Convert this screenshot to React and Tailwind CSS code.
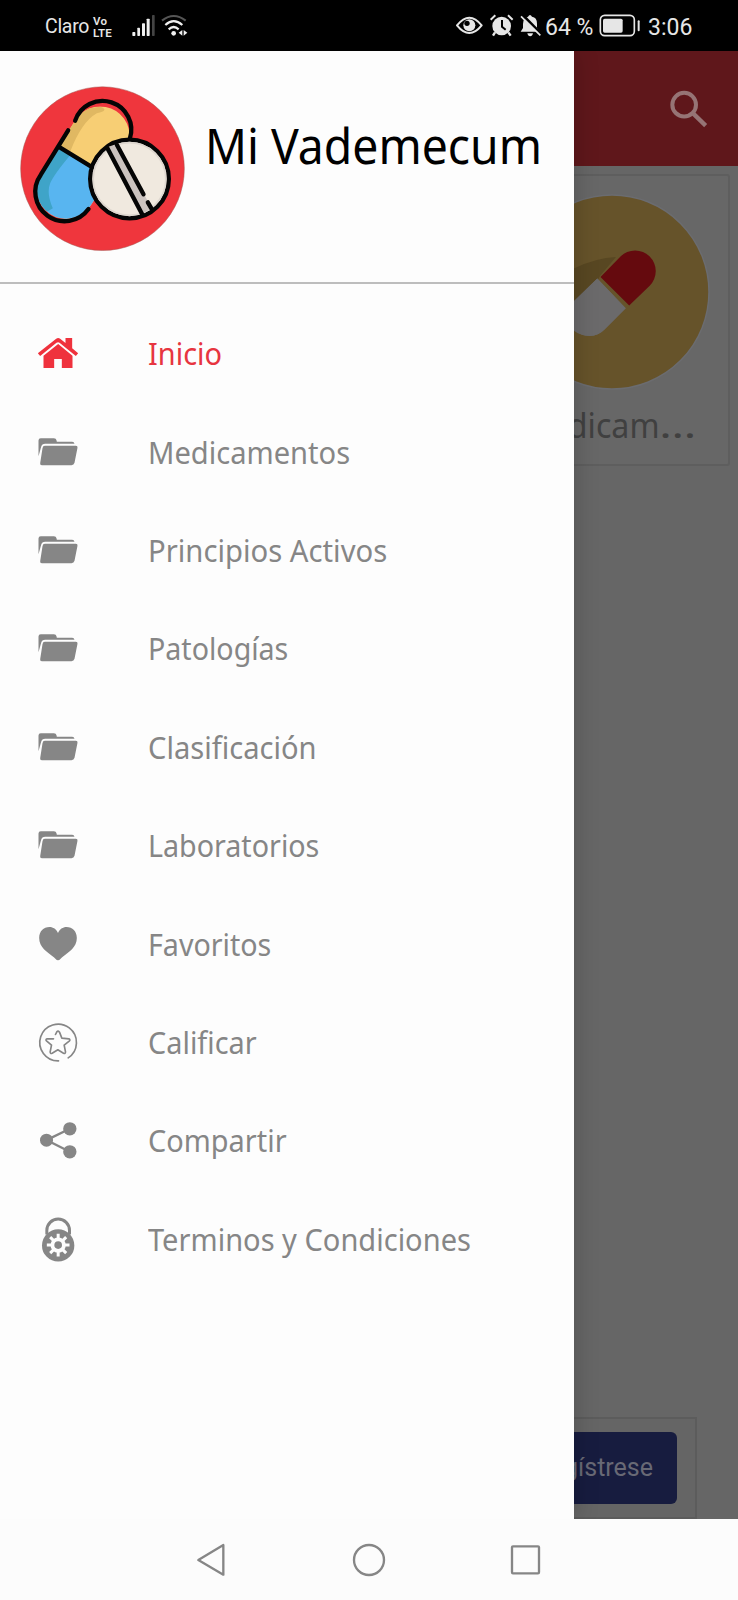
import React from "react";

const GREY = "#868686";
const RED = "#e73540";

function IconBox({ dx, dy, children }) {
  return (
    <svg width="48" height="48" viewBox="-72 -72 144 144" className="shrink-0">
      <g transform={`translate(${-dx} ${-dy})`}>{children}</g>
    </svg>
  );
}

function HomeIcon() {
  return (
    <IconBox dx={172.5} dy={129}>
      <g fill="#ef323d">
        <path d="M112 130 L167 86 Q173 82 179 86 L195 99 V84 H215 V115 L233 130 L226 138 L177 98 Q173 95 168 98 L119 138 Z" />
        <path d="M173 102 L216 137 V174 H184 V147 H161 V174 H129 V137 Z" />
      </g>
    </IconBox>
  );
}

function FolderIcon() {
  return (
    <IconBox dx={172.5} dy={425.5}>
      <g fill={GREY}>
        <path d="M114 438 V391 Q114 384 121 384 H160 Q167 384 168 390 L169 395 H215 Q221 395 222 401 H134 Q124 401 122 410 Z" />
        <path d="M133 407 H226 Q232 407 231 413 L222 458 Q220 465 213 465 H124 Q118 465 119 459 L126 414 Q127 407 133 407 Z" />
      </g>
    </IconBox>
  );
}

function HeartIcon() {
  return (
    <IconBox dx={172.5} dy={131}>
      <path
        fill={GREY}
        d="M172.500 180 Q168 180 160 171 C140 155 116 141 116 113 C116 93 129 80 147 80 C158 80 168 87 172.500 98 C177 87 187 80 198 80 C216 80 229 93 229 113 C229 141 205 155 185 171 Q177 180 172.500 180 Z"
      />
    </IconBox>
  );
}

function StarIcon() {
  return (
    <IconBox dx={172.5} dy={425.5}>
      <g fill="none" stroke={GREY} strokeWidth="5" strokeLinecap="round" strokeLinejoin="round">
        <path d="M174 482 A55 55 0 1 1 203 473" />
        <path d="M159 416 L140 416 Q134 418 138 422 L153 435 L149 455 Q149 462 155 459 L172 449 L189 459 Q195 462 195 455 L191 435 L207 422 Q210 418 205 416 L184 414 L177 396 Q173 390 169 395 L165 403" />
      </g>
    </IconBox>
  );
}

function ShareIcon() {
  return (
    <IconBox dx={172.5} dy={120.6}>
      <path d="M208 87 L138 121 L208 156" fill="none" stroke={GREY} strokeWidth="7" />
      <g fill={GREY}>
        <circle cx="138" cy="121" r="19.500" />
        <circle cx="208" cy="87" r="20" />
        <circle cx="208" cy="156" r="20" />
      </g>
    </IconBox>
  );
}

function LockIcon() {
  return (
    <IconBox dx={172.5} dy={415.8}>
      <path d="M139 402 V390 A34 34 0 0 1 207 390 V402" fill="none" stroke={GREY} strokeWidth="9" />
      <circle cx="173" cy="435" r="48.500" fill={GREY} />
      <g stroke="#fdfdfd" strokeWidth="9">
        <path d="M173 400 V468 M139 434 H207 M149 410 L197 458 M197 410 L149 458" />
      </g>
      <circle cx="173" cy="434" r="23" fill="#fdfdfd" />
      <circle cx="173" cy="434" r="11.500" fill={GREY} />
    </IconBox>
  );
}

const ITEMS = [
  { label: "Inicio", icon: HomeIcon, cls: "scale-x-[0.965]", active: true },
  { label: "Medicamentos", icon: FolderIcon, cls: "scale-x-[0.97]" },
  { label: "Principios Activos", icon: FolderIcon, cls: "scale-x-[0.975]" },
  { label: "Patologías", icon: FolderIcon, cls: "scale-x-[0.953]" },
  { label: "Clasificación", icon: FolderIcon, cls: "scale-x-[0.97]" },
  { label: "Laboratorios", icon: FolderIcon, cls: "scale-x-[0.955]" },
  { label: "Favoritos", icon: HeartIcon, cls: "scale-x-[0.954]" },
  { label: "Calificar", icon: StarIcon, cls: "scale-x-[0.962]" },
  { label: "Compartir", icon: ShareIcon, cls: "scale-x-[0.964]" },
  { label: "Terminos y Condiciones", icon: LockIcon, cls: "scale-x-[0.968]" },
];

function Logo() {
  return (
    <svg width="165" height="165" viewBox="59.500 78 495 495" className="shrink-0">
      <defs>
        <clipPath id="capsule">
          <path d="M228 177 A88 88 0 0 1 376 272 L272 436 A88 88 0 0 1 124 340 Z" />
        </clipPath>
      </defs>
      <circle cx="307" cy="326" r="245.500" fill="#ef363d" stroke="#a35a55" strokeWidth="1.500" />
      <g clipPath="url(#capsule)">
        <rect x="90" y="120" width="320" height="370" fill="#f7ce74" />
        <path d="M170 270 L228 150 L300 140 Q330 150 290 160 Q245 185 210 275 Z" fill="#e0b862" />
        <path d="M90 205 L290 330 L300 490 H90 Z" fill="#58b5f0" />
        <path d="M90 205 L213 282 Q160 345 150 370 Q138 400 158 445 L100 480 Z" fill="#3fa4c8" />
      </g>
      <g fill="none" stroke="#050505" strokeWidth="13" strokeLinecap="round">
        <path d="M225 182 A86 86 0 0 1 389 236" />
        <path d="M204 211 L122 344 A88 88 0 0 0 265 447" />
        <path d="M180 263 L272 319" />
      </g>
      <circle cx="388" cy="357" r="118" fill="#f0e9df" stroke="#050505" strokeWidth="13" />
      <circle cx="388" cy="357" r="109" fill="none" stroke="#ded7cf" strokeWidth="5" />
      <path d="M320 262 L350 252 L454 444 L426 462 Z" fill="#cbc3bf" />
      <g fill="none" stroke="#050505" strokeWidth="13" strokeLinecap="round">
        <path d="M321 263 L426 463 M350 254 L430 403 M443 427 L454 446" />
      </g>
    </svg>
  );
}

function StatusBar() {
  return (
    <header className="flex h-[51px] items-center bg-black pl-[45px] pr-[44px] font-[Roboto,sans-serif] text-[#e6e6e6]">
      <span className="mt-[3px] w-[48px] text-[19.500px] leading-none tracking-[-0.3px] whitespace-nowrap">Claro</span>
      <span className="mt-[2px] flex w-[39px] flex-col text-[11.500px] leading-[12px] font-semibold tracking-[0.2px]">
        <span className="block h-[12px]">Vo</span>
        <span className="block h-[12px]">LTE</span>
      </span>
      <svg width="56" height="24" viewBox="396 42 168 72">
        <g fill="#f0f0f0">
          <rect x="397" y="96" width="9" height="12" rx="2" />
          <rect x="412" y="83" width="8" height="25" rx="2" />
          <rect x="426" y="70" width="9" height="38" rx="2" />
          <rect x="440" y="56" width="9" height="52" rx="2" />
          <rect x="456" y="45" width="8" height="63" rx="2" fill="#444" />
          <circle cx="521" cy="100" r="7" />
          <path d="M547 90 V107 L536 98.500 Z M551 90 V107 L562 98.500 Z" />
        </g>
        <g fill="none" strokeWidth="6.500">
          <path d="M486 62 Q521 34 557 62" stroke="#555" />
          <path d="M496 75 Q521 52 547 75" stroke="#f0f0f0" />
          <path d="M506 88 Q521 74 536 88" stroke="#f0f0f0" />
        </g>
      </svg>
      <svg width="86" height="24" viewBox="257 42 258 72" className="ml-auto">
        <path d="M260 76 Q297 30 334 76 Q297 122 260 76 Z" fill="none" stroke="#e6e6e6" strokeWidth="6" strokeLinejoin="round" />
        <circle cx="297" cy="76" r="18" fill="#e6e6e6" />
        <circle cx="290" cy="70" r="8" fill="#000" />
        <circle cx="394" cy="78" r="28" fill="#e6e6e6" />
        <path d="M395 60 V80 L406 89" fill="none" stroke="#000" strokeWidth="6" />
        <path d="M361 59 L375 46 M427 59 L413 46" stroke="#e6e6e6" strokeWidth="6" />
        <path d="M374 97 L368 107 M414 97 L421 107" stroke="#e6e6e6" strokeWidth="7" />
        <path d="M451 95 H507 L500 84 V71 Q500 52 485 50 Q479 40 473 50 Q458 54 458 72 V84 Z" fill="#e6e6e6" />
        <path d="M471 100 H488 Q486 109 479.500 109 Q473 109 471 100 Z" fill="#e6e6e6" />
        <path d="M457 45 L515 104" stroke="#000" strokeWidth="8" />
        <path d="M452 49 L510 106" stroke="#e6e6e6" strokeWidth="5" />
      </svg>
      <span className="mt-[3px] ml-[3px] w-[54px] text-[23px] leading-none whitespace-nowrap">64 %</span>
      <svg width="42" height="24" viewBox="691 42 126 72">
        <rect x="695" y="46" width="102" height="61" rx="13" fill="none" stroke="#e6e6e6" strokeWidth="5" />
        <rect x="703" y="56" width="59" height="42" rx="5" fill="#e6e6e6" />
        <rect x="807" y="61" width="6" height="33" rx="3" fill="#e6e6e6" />
      </svg>
      <span className="mt-[3px] ml-[7px] w-[46px] text-[23px] leading-none whitespace-nowrap">3:06</span>
    </header>
  );
}

function Backdrop() {
  return (
    <div className="flex h-full flex-col bg-[#666666]">
      <div className="flex h-[115px] shrink-0 items-center justify-end bg-[#5f171b] pr-[30px]">
        <svg width="38" height="38" viewBox="330 119 114 114">
          <circle cx="372.500" cy="163" r="35.500" fill="none" stroke="#967475" strokeWidth="12" />
          <path d="M400 190 L437 226" stroke="#967475" strokeWidth="13" />
        </svg>
      </div>
      <div className="mt-[8px] mr-[8px] flex h-[292px] w-[236px] flex-col items-center self-end rounded-[3px] border-2 border-[#5e5e5e] bg-[#676767]">
        <svg width="200" height="200" viewBox="512 192 200 200" className="mt-[16px] shrink-0">
          <circle cx="612" cy="292" r="97" fill="#66532a" stroke="#6b6c70" strokeWidth="1.500" />
          <path d="M512 292 L575 268 Q596 258 616 257 L600 276 L560 346 L512 350 Z" fill="#584722" />
          <path d="M600.500 277 L620.500 256.500 A20.600 20.600 0 0 1 649.700 285.700 L629.200 305.500 Z" fill="#650a0e" />
          <path d="M597.300 278.500 L574 301 A20.600 20.600 0 0 0 604.500 329.500 L625.700 308.300 Z" fill="#6b6a6b" />
          <path d="M597.300 278.500 L566 309 V323 Q576 336 590 336 Q598 336 604.500 329.500 L625.700 308.300 Z" fill="#6b6a6b" />
        </svg>
        <span className="mt-[9px] mr-[38px] w-[184px] origin-right scale-x-[0.92] text-right text-[35px] leading-[48px] whitespace-nowrap text-[#404040]">
          Medicam<span className="inline-block origin-left scale-x-[1.45]">…</span>
        </span>
      </div>
      <div className="mt-auto mr-[41px] flex h-[102px] w-[656px] items-center justify-end self-end border-2 border-[#5c5c5c] bg-[#656565] pr-[18px]">
        <div className="flex h-[72px] w-[300px] items-center justify-end rounded-[6px] bg-[#171c3f] pr-[24px] font-[Roboto,sans-serif] text-[25px] text-[#686975]">
          Regístrese
        </div>
      </div>
    </div>
  );
}

function Drawer() {
  return (
    <aside className="absolute inset-y-0 left-0 flex w-[574px] flex-col bg-[#fdfdfd] shadow-[2px_0_22px_rgba(0,0,0,0.18)]">
      <div className="flex h-[233px] shrink-0 border-b-2 border-[#bdbdbd] pt-[35px] pl-[20px]">
        <Logo />
        <h1 className="mt-[22px] ml-[20px] origin-left scale-x-[0.945] text-[49px] leading-[74px] whitespace-nowrap text-black">
          Mi Vademecum
        </h1>
      </div>
      <ul className="pt-[20px]">
        {ITEMS.map(({ label, icon: Icon, cls, active }) => (
          <li key={label} className="flex h-[98.400px] items-center pl-[33.500px]">
            <Icon />
            <span
              className={`mt-[2px] ml-[66px] origin-left text-[30px] leading-none whitespace-nowrap ${cls}`}
              style={{ color: active ? RED : GREY }}
            >
              {label}
            </span>
          </li>
        ))}
      </ul>
    </aside>
  );
}

function NavBar() {
  return (
    <nav className="flex h-[81px] items-center justify-center gap-[109px] bg-[#fcfcfc]">
      <svg width="48" height="48" viewBox="-72 -72 144 144" fill="none" stroke="#868686" strokeWidth="7" strokeLinejoin="round">
        <path d="M-41 0 L34 -45 V44 Z" />
      </svg>
      <svg width="48" height="48" viewBox="-72 -72 144 144" fill="none" stroke="#868686" strokeWidth="7">
        <circle cx="0" cy="0" r="45" />
      </svg>
      <svg width="48" height="48" viewBox="-72 -72 144 144" fill="none" stroke="#868686" strokeWidth="7">
        <rect x="-42" y="-41" width="81" height="81" rx="3" />
      </svg>
    </nav>
  );
}

export default function App() {
  return (
    <div className="h-[1600px] w-[738px] overflow-hidden font-['Noto_Sans',sans-serif]">
      <StatusBar />
      <main className="relative h-[1468px] overflow-hidden">
        <Backdrop />
        <Drawer />
      </main>
      <NavBar />
    </div>
  );
}
